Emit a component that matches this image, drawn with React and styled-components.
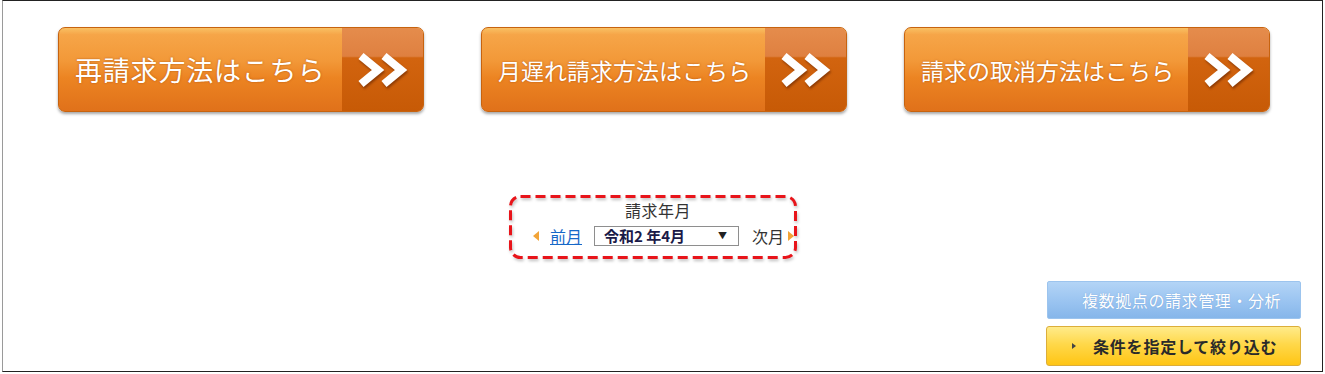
import React from "react";
import styled, { createGlobalStyle } from "styled-components";

const Global = createGlobalStyle`
  body {
    margin: 0;
    background: #fff;
    font-family: "Noto Sans CJK JP", "Noto Sans", sans-serif;
  }
`;

const Frame = styled.div`
  box-sizing: border-box;
  margin-left: 2px;
  width: 1321px;
  height: 372px;
  border: 1px solid #222;
  border-left-color: #9a9a9a;
  padding-top: 26px;
`;

const ButtonRow = styled.div`
  display: flex;
  gap: 57px;
  padding-left: 55px;
`;

const OrangeButton = styled.a`
  display: flex;
  width: 366px;
  height: 85px;
  box-sizing: border-box;
  border: 1px solid #c7630f;
  border-radius: 7px;
  overflow: hidden;
  text-decoration: none;
  box-shadow: 0 2px 3px rgba(0, 0, 0, 0.35);
  background: linear-gradient(
    to bottom,
    #f9c063 0%,
    #f6a548 8%,
    #f29838 40%,
    #ec8422 60%,
    #e0711a 100%
  );
`;

const Label = styled.span`
  flex: 1;
  display: flex;
  align-items: center;
  padding-left: 16px;
  color: #fff;
  font-size: ${(p) => p.$size}px;
  letter-spacing: ${(p) => p.$spacing}px;
  white-space: nowrap;
  text-shadow: 0 0 2px rgba(150, 60, 0, 0.7);
`;

const ArrowCell = styled.span`
  width: 81px;
  display: flex;
  align-items: center;
  justify-content: center;
  background: linear-gradient(
    to bottom,
    #e58c4c 0%,
    #df8040 34%,
    #d2640f 36%,
    #c75a06 100%
  );
`;

const Chevrons = () => (
  <svg width="52" height="36" viewBox="0 0 52 36" style={{ filter: "drop-shadow(1px 2px 1px rgba(90,30,0,0.55))" }}>
    <polyline points="4,4 21,18 4,32" fill="none" stroke="#fff" strokeWidth="8" strokeLinejoin="miter" />
    <polyline points="27,4 44,18 27,32" fill="none" stroke="#fff" strokeWidth="8" strokeLinejoin="miter" />
  </svg>
);

const Nav = styled.div`
  position: relative;
  box-sizing: border-box;
  width: 288px;
  height: 64px;
  margin: 83px 0 0 506px;
  padding: 3px;
  font-size: 16px;
  color: #333;
`;

const DashOutline = styled.svg`
  position: absolute;
  inset: 0;
  width: 100%;
  height: 100%;
  overflow: visible;
  pointer-events: none;
  filter: drop-shadow(1px 2px 1.5px rgba(0, 0, 0, 0.25));
`;

const NavTitle = styled.div`
  text-align: center;
  line-height: 20px;
  padding-top: 2px;
  padding-left: 10px;
  letter-spacing: 0.5px;
`;

const NavRow = styled.div`
  display: flex;
  align-items: center;
  white-space: nowrap;
  margin-top: 6px;
  padding-left: 21px;
  height: 20px;
`;

const Tri = styled.span`
  width: 0;
  height: 0;
  border-top: 5px solid transparent;
  border-bottom: 5px solid transparent;
  ${(p) =>
    p.$dir === "left"
      ? "border-right: 6px solid #f2a438;"
      : "border-left: 6px solid #f2a438;"}
  margin: ${(p) => p.$m};
`;

const MonthLink = styled.a`
  color: #1668c8;
  text-decoration: underline;
  cursor: pointer;
`;

const Plain = styled.span`
  color: #333;
`;

const Select = styled.div`
  box-sizing: border-box;
  width: 146px;
  height: 20px;
  margin: 0 13px 0 12px;
  border: 1px solid #8e8e8e;
  display: flex;
  align-items: center;
  justify-content: space-between;
  padding: 0 11px 0 9px;
  font-weight: 700;
  color: #1a1a48;
  font-size: 15px;
  line-height: 18px;
`;

const Caret = styled.span`
  font-size: 9px;
  color: #222;
`;

const SideActions = styled.div`
  display: flex;
  flex-direction: column;
  align-items: flex-end;
  gap: 7px;
  margin-top: 22px;
  padding-right: 21px;
`;

const SideButton = styled.a`
  box-sizing: border-box;
  display: flex;
  align-items: center;
  text-decoration: none;
  white-space: nowrap;
  font-size: 16px;
  border-radius: 2px;
  ${(p) =>
    p.$tone === "blue"
      ? `
    width: 254px;
    height: 38px;
    padding-left: 34px;
    letter-spacing: 0.6px;
    color: #fff;
    border: 1px solid #9cc4ee;
    background: linear-gradient(to bottom, #b3d4f6 0%, #9cc5f1 50%, #86b6ea 100%);
    text-shadow: 0 0 1px rgba(60,110,180,0.5);
  `
      : `
    width: 255px;
    height: 40px;
    padding-left: 25px;
    letter-spacing: 0.8px;
    color: #2a2a2a;
    font-weight: 700;
    border: 1px solid #dcae3a;
    border-radius: 3px;
    background: linear-gradient(to bottom, #ffeb8a 0%, #ffd84a 45%, #ffc514 100%);
  `}
`;

const SmallTri = styled.span`
  width: 0;
  height: 0;
  border-top: 3px solid transparent;
  border-bottom: 3px solid transparent;
  border-left: 4px solid #444;
  margin-right: 17px;
`;

const buttons = [
  { label: "再請求方法はこちら", size: 27, spacing: 0.8 },
  { label: "月遅れ請求方法はこちら", size: 23, spacing: 0 },
  { label: "請求の取消方法はこちら", size: 23, spacing: 0 },
];

export default function App() {
  return (
    <>
      <Global />
      <Frame>
        <ButtonRow>
          {buttons.map((b) => (
            <OrangeButton key={b.label}>
              <Label $size={b.size} $spacing={b.spacing}>{b.label}</Label>
              <ArrowCell>
                <Chevrons />
              </ArrowCell>
            </OrangeButton>
          ))}
        </ButtonRow>

        <Nav>
          <DashOutline>
            <rect
              x="1.5"
              y="1.5"
              width="285"
              height="61"
              rx="10"
              fill="none"
              stroke="#e8141a"
              strokeWidth="3"
              strokeDasharray="10 5"
            />
          </DashOutline>
          <NavTitle>請求年月</NavTitle>
          <NavRow>
            <Tri $dir="left" $m="0 11px 0 0" />
            <MonthLink>前月</MonthLink>
            <Select>
              <span>令和2 年4月</span>
              <Caret>▼</Caret>
            </Select>
            <Plain>次月</Plain>
            <Tri $dir="right" $m="0 0 0 4px" />
          </NavRow>
        </Nav>

        <SideActions>
          <SideButton $tone="blue">複数拠点の請求管理・分析</SideButton>
          <SideButton $tone="yellow">
            <SmallTri />
            条件を指定して絞り込む
          </SideButton>
        </SideActions>
      </Frame>
    </>
  );
}
